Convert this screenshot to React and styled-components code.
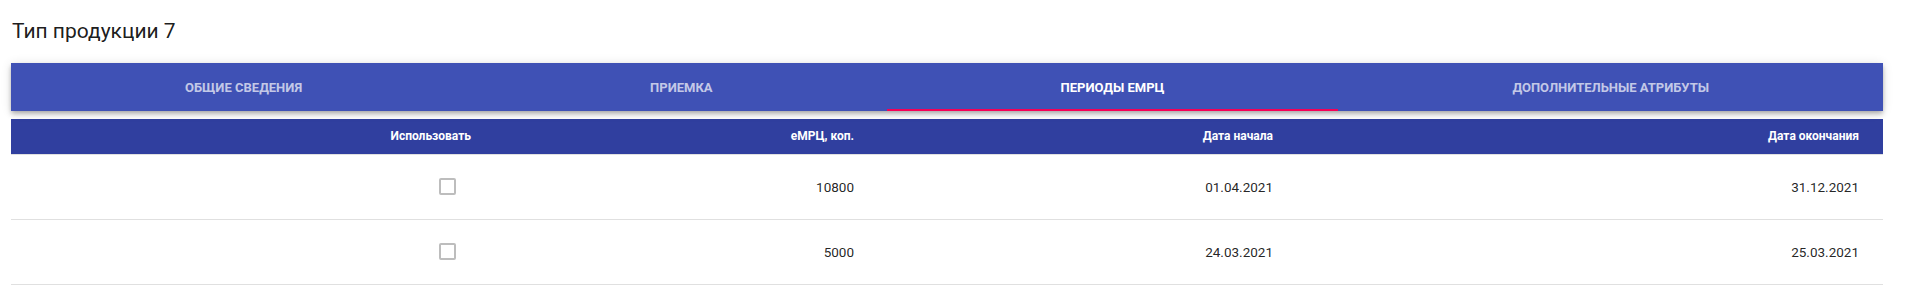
import React, { useState } from "react";
import styled, { createGlobalStyle } from "styled-components";

const GlobalStyle = createGlobalStyle`
  html, body {
    margin: 0;
    padding: 0;
    background: #fff;
    font-family: Roboto, "Liberation Sans", sans-serif;
  }
`;

const Page = styled.div`
  padding: 0 23px 0 11px;
`;

const Title = styled.h6`
  margin: 15px 0 16px 1px;
  font-size: 21px;
  line-height: 32px;
  font-weight: 400;
  color: rgba(0, 0, 0, 0.9);
`;

const TabBar = styled.div`
  display: flex;
  height: 48px;
  background: #3f51b5;
  box-shadow: 0px 2px 4px -1px rgba(0, 0, 0, 0.2),
    0px 4px 5px 0px rgba(0, 0, 0, 0.14), 0px 1px 10px 0px rgba(0, 0, 0, 0.12);
  position: relative;
  z-index: 1;
`;

const Tab = styled.button`
  flex: 1 1 auto;
  position: relative;
  border: 0;
  background: transparent;
  padding: 6px 12px;
  font-family: Roboto, "Liberation Sans", sans-serif;
  font-size: 13px;
  font-weight: 700;
  text-transform: uppercase;
  white-space: nowrap;
  cursor: pointer;
  color: ${(p) => (p.$active ? "#ffffff" : "rgba(255, 255, 255, 0.7)")};

  &::after {
    content: "";
    position: absolute;
    left: 0;
    right: 0;
    bottom: 0;
    height: 2px;
    background: ${(p) => (p.$active ? "#f50057" : "transparent")};
  }
`;

const Table = styled.table`
  width: 100%;
  margin-top: 8px;
  border-collapse: collapse;
  table-layout: fixed;
`;

const HeadRow = styled.tr`
  background: #303f9f;
`;

const Th = styled.th`
  height: 35px;
  box-sizing: border-box;
  padding: 0 ${(p) => (p.$last ? "24px" : "56px")} 0 24px;
  width: ${(p) => p.$width || "auto"};
  text-align: right;
  font-size: 12px;
  font-weight: 700;
  color: #ffffff;
  border-bottom: 1px solid #e0e0e0;
  white-space: nowrap;
`;

const Td = styled.td`
  height: 65px;
  box-sizing: border-box;
  padding: 0 ${(p) => (p.$last ? "24px" : "56px")} 0 24px;
  text-align: right;
  vertical-align: middle;
  font-size: 13.5px;
  color: rgba(0, 0, 0, 0.87);
  border-bottom: 1px solid #e0e0e0;
`;

const CheckBox = styled.span`
  display: inline-block;
  vertical-align: middle;
  width: 17px;
  height: 17px;
  box-sizing: border-box;
  border: 2px solid #bdbdbd;
  border-radius: 2px;
  margin-right: 15px;
`;

const tabs = [
  "Общие сведения",
  "Приемка",
  "Периоды ЕМРЦ",
  "Дополнительные атрибуты",
];

const rows = [
  { price: "10800", start: "01.04.2021", end: "31.12.2021" },
  { price: "5000", start: "24.03.2021", end: "25.03.2021" },
];

export default function App() {
  const [active, setActive] = useState(2);
  return (
    <Page>
      <GlobalStyle />
      <Title>Тип продукции 7</Title>
      <TabBar>
        {tabs.map((t, i) => (
          <Tab key={t} $active={i === active} onClick={() => setActive(i)}>
            {t}
          </Tab>
        ))}
      </TabBar>
      <Table>
        <thead>
          <HeadRow>
            <Th $width="516px">Использовать</Th>
            <Th $width="383px">еМРЦ, коп.</Th>
            <Th $width="419px">Дата начала</Th>
            <Th $last>Дата окончания</Th>
          </HeadRow>
        </thead>
        <tbody>
          {rows.map((r) => (
            <tr key={r.start}>
              <Td>
                <CheckBox />
              </Td>
              <Td>{r.price}</Td>
              <Td>{r.start}</Td>
              <Td $last>{r.end}</Td>
            </tr>
          ))}
        </tbody>
      </Table>
    </Page>
  );
}
